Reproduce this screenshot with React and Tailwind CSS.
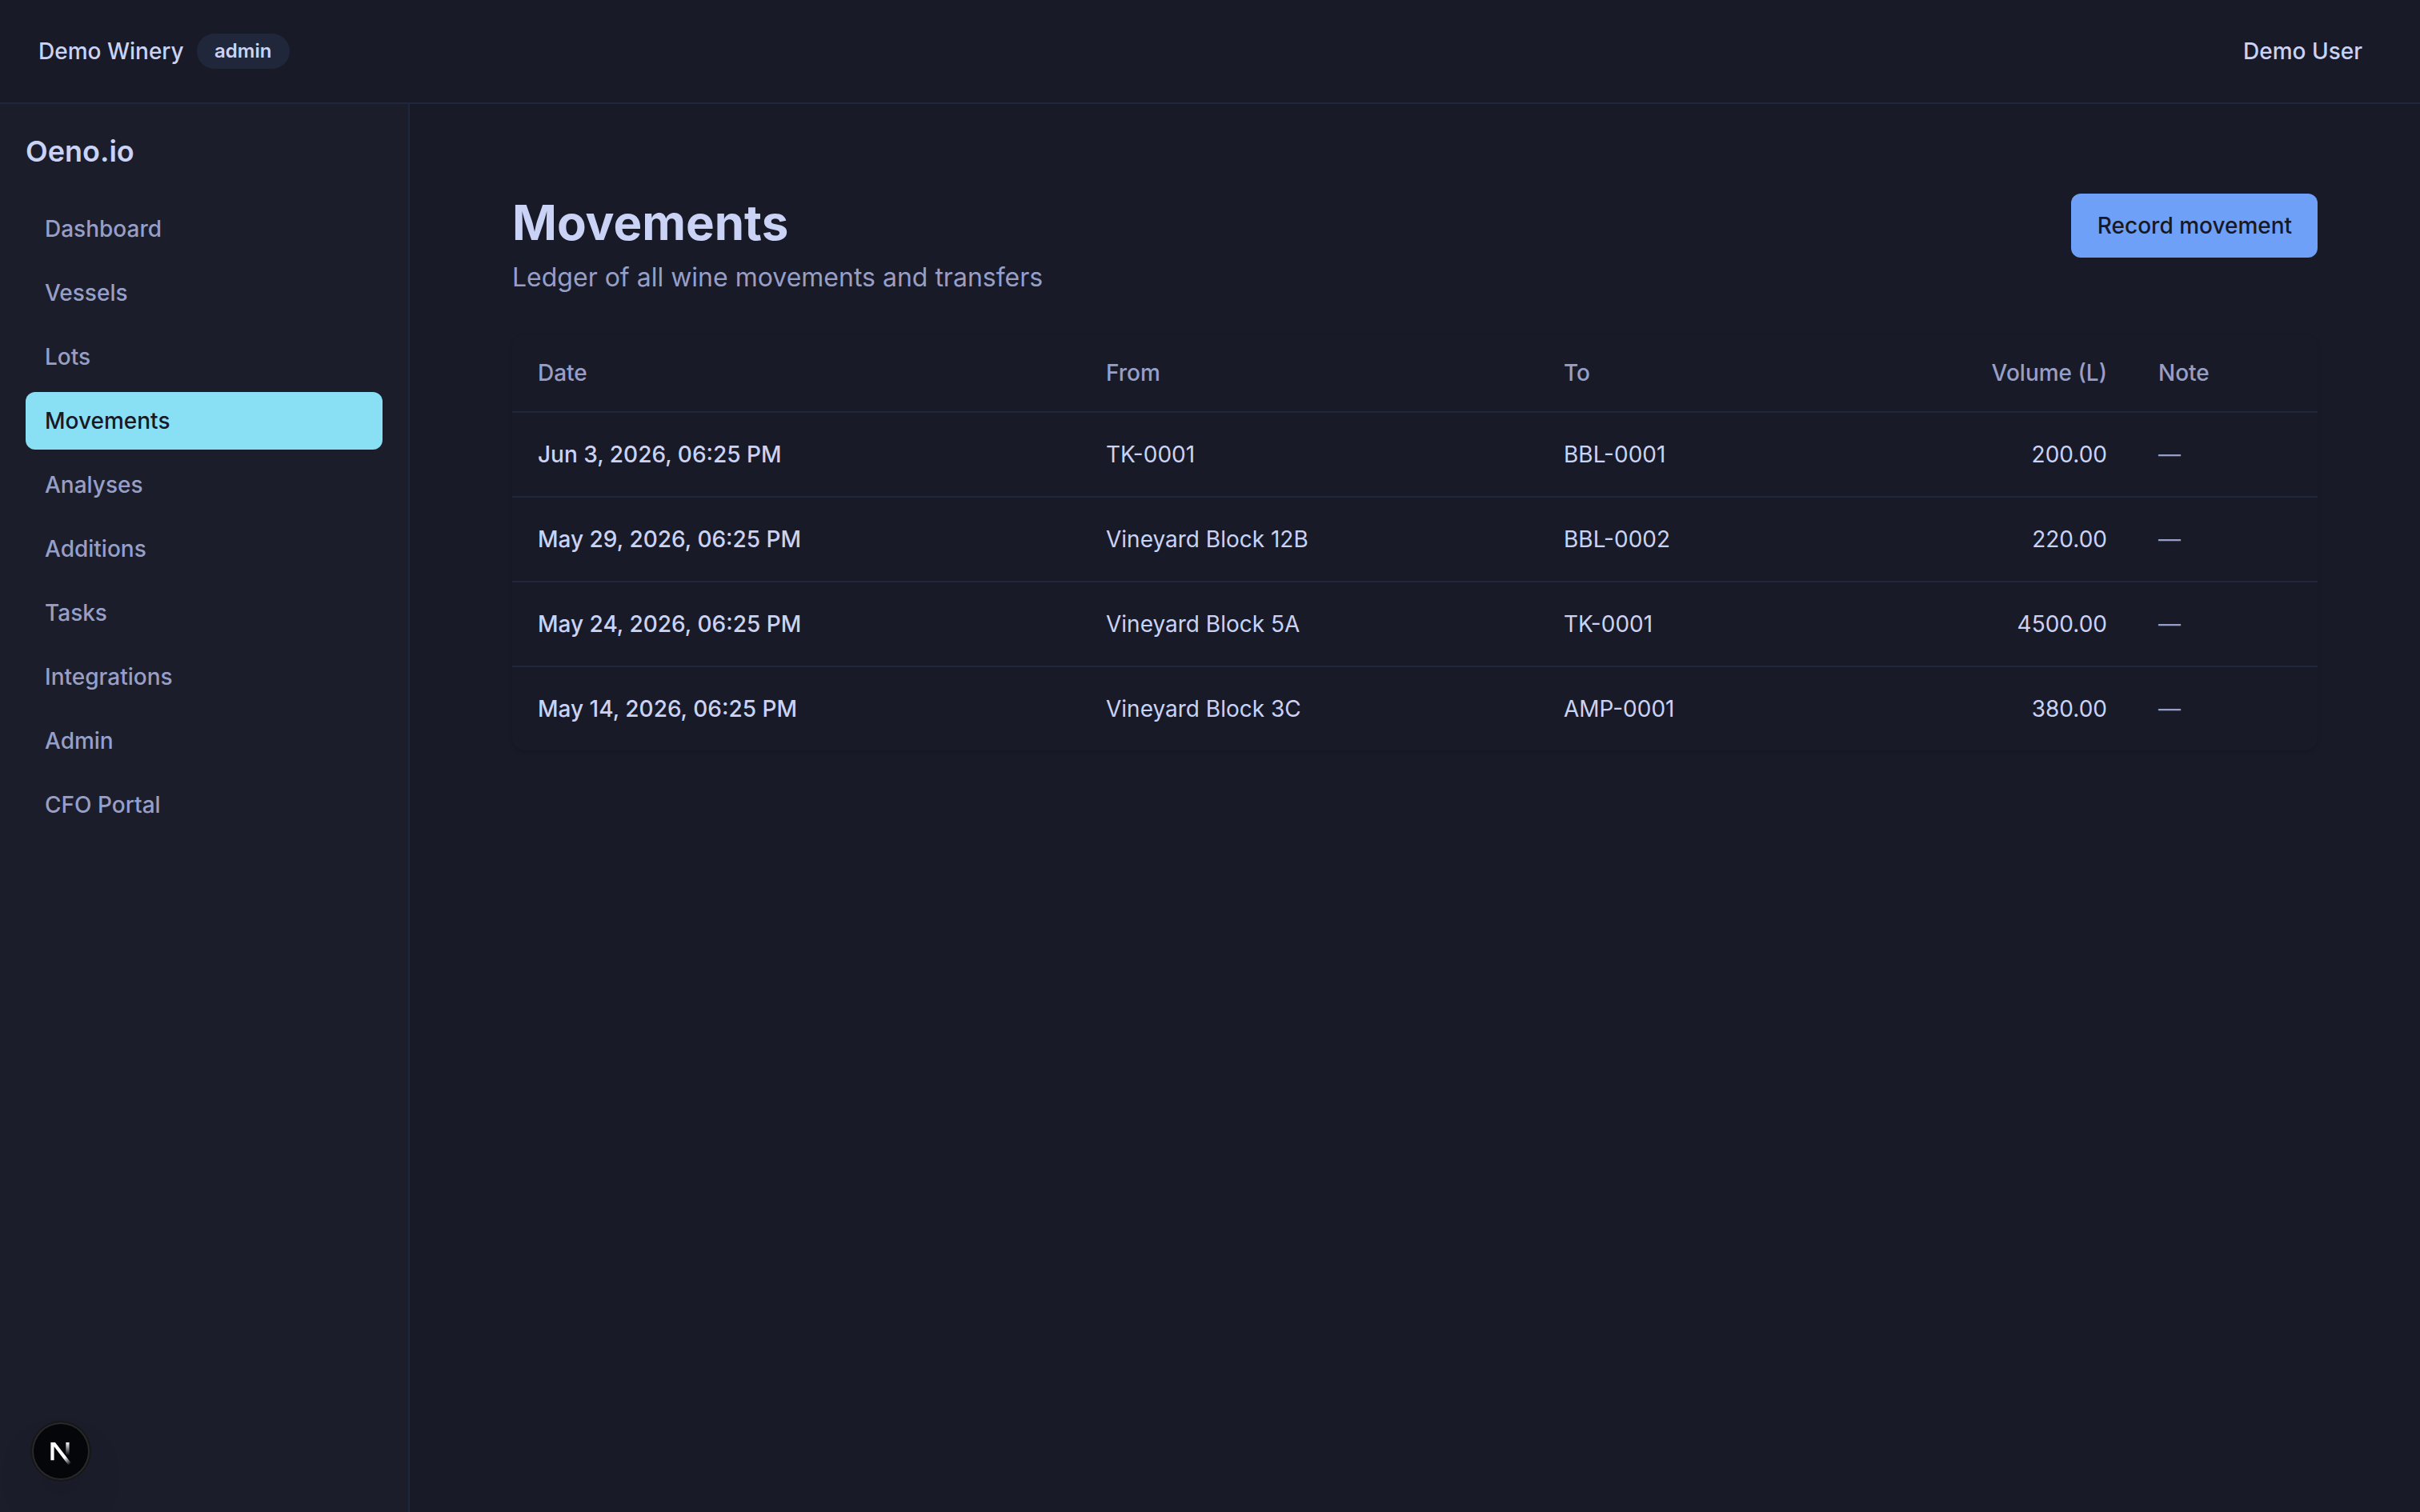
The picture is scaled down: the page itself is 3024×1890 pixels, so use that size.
const navItems = [
  'Dashboard',
  'Vessels',
  'Lots',
  'Movements',
  'Analyses',
  'Additions',
  'Tasks',
  'Integrations',
  'Admin',
  'CFO Portal',
];

const movements = [
  { date: 'Jun 3, 2026, 06:25 PM', from: 'TK-0001', to: 'BBL-0001', volume: '200.00' },
  { date: 'May 29, 2026, 06:25 PM', from: 'Vineyard Block 12B', to: 'BBL-0002', volume: '220.00' },
  { date: 'May 24, 2026, 06:25 PM', from: 'Vineyard Block 5A', to: 'TK-0001', volume: '4500.00' },
  { date: 'May 14, 2026, 06:25 PM', from: 'Vineyard Block 3C', to: 'AMP-0001', volume: '380.00' },
];

function Header() {
  return (
    <header className="flex h-[130px] shrink-0 items-center justify-between border-b-2 border-[#21273a] pl-12 pr-[72px]">
      <div className="flex items-center gap-4">
        <span className="font-medium">Demo Winery</span>
        <span className="flex h-11 w-[116px] items-center justify-center rounded-full bg-[#21273a] text-2xl leading-8 font-semibold">
          admin
        </span>
      </div>
      <span className="font-medium">Demo User</span>
    </header>
  );
}

function Sidebar() {
  return (
    <aside className="w-[512px] shrink-0 border-r-2 border-[#21273a] bg-[#1b1d2b] px-8 pt-[31px]">
      <div className="mb-[33px] text-4xl leading-[56px] font-semibold">Oeno.io</div>
      <nav className="flex flex-col gap-2">
        {navItems.map((item) => (
          <a
            key={item}
            className={
              item === 'Movements'
                ? 'rounded-xl bg-[#89dff4] px-6 py-4 font-medium text-[#181926]'
                : 'rounded-xl px-6 py-4 font-medium text-[#979fc6]'
            }
          >
            {item}
          </a>
        ))}
      </nav>
    </aside>
  );
}

function MovementsTable() {
  return (
    <div className="overflow-hidden rounded-2xl bg-[#191a28] shadow-[0_2px_6px_rgba(0,0,0,0.07),0_2px_4px_-2px_rgba(0,0,0,0.07)]">
      <table className="w-full table-fixed border-separate border-spacing-0">
        <colgroup>
          <col className="w-[710px]" />
          <col className="w-[572px]" />
          <col className="w-[421px]" />
          <col className="w-[322px]" />
          <col />
        </colgroup>
        <thead>
          <tr className="text-left text-[#979fc6] [&>th]:h-[98px] [&>th]:border-b-2 [&>th]:border-[#21273a]">
            <th className="px-8 font-medium">Date</th>
            <th className="px-8 font-medium">From</th>
            <th className="px-8 font-medium">To</th>
            <th className="px-8 text-right font-medium">Volume (L)</th>
            <th className="px-8 font-medium">Note</th>
          </tr>
        </thead>
        <tbody>
          {movements.map((m) => (
            <tr key={m.date} className="[&>td]:border-b-2 [&>td]:border-[#21273a] last:[&>td]:border-b-0">
              <td className="p-8 font-medium">{m.date}</td>
              <td className="p-8">{m.from}</td>
              <td className="p-8">{m.to}</td>
              <td className="p-8 text-right">{m.volume}</td>
              <td className="p-8 text-[#979fc6]">—</td>
            </tr>
          ))}
        </tbody>
      </table>
    </div>
  );
}

// Next.js dev indicator, floats over the sidebar
function DevIndicator() {
  return (
    <div className="fixed bottom-10 left-10 size-[72px] rounded-full bg-[#05060a] shadow-[0_0_0_2px_#171717,inset_0_0_0_2px_rgba(255,255,255,0.14),0_32px_64px_-16px_rgba(0,0,0,0.24)]">
      <svg className="size-full" viewBox="0 0 36 36" fill="none">
        <g transform="translate(10.4 11)" strokeWidth="2.1" clipPath="url(#glyph)">
          <path d="M13.3 15.2 L2.34 1 V12.6" stroke="url(#diagonal)" />
          <path d="M11.825 1.5 V13.1" stroke="url(#stem)" />
        </g>
        <defs>
          <clipPath id="glyph">
            <rect x="0" y="1.5" width="16" height="15" />
          </clipPath>
          <linearGradient id="diagonal" x1="9.95555" y1="11.1226" x2="15.4778" y2="17.9671" gradientUnits="userSpaceOnUse">
            <stop stopColor="white" />
            <stop offset="0.604072" stopColor="white" stopOpacity="0" />
            <stop offset="1" stopColor="white" stopOpacity="0" />
          </linearGradient>
          <linearGradient id="stem" x1="11.8222" y1="1.40039" x2="11.791" y2="9.62542" gradientUnits="userSpaceOnUse">
            <stop stopColor="white" />
            <stop offset="1" stopColor="white" stopOpacity="0" />
          </linearGradient>
        </defs>
      </svg>
    </div>
  );
}

export default function App() {
  return (
    <div className="flex h-screen flex-col bg-[#191a28] font-['Inter',sans-serif] text-[28px] leading-10 text-[#cad3f5] antialiased">
      <Header />
      <div className="flex flex-1">
        <Sidebar />
        <main className="flex-1 px-32 pt-28">
          <div className="mb-[47px] flex items-start justify-between">
            <div>
              <h1 className="text-6xl leading-[72px] font-bold">Movements</h1>
              <p className="mt-[9px] text-[32px] leading-[48px] text-[#979fc6]">
                Ledger of all wine movements and transfers
              </p>
            </div>
            <button className="h-20 w-[308px] rounded-xl bg-[#6ea0f8] pl-px font-medium text-[#181926]">
              Record movement
            </button>
          </div>
          <MovementsTable />
        </main>
      </div>
      <DevIndicator />
    </div>
  );
}
